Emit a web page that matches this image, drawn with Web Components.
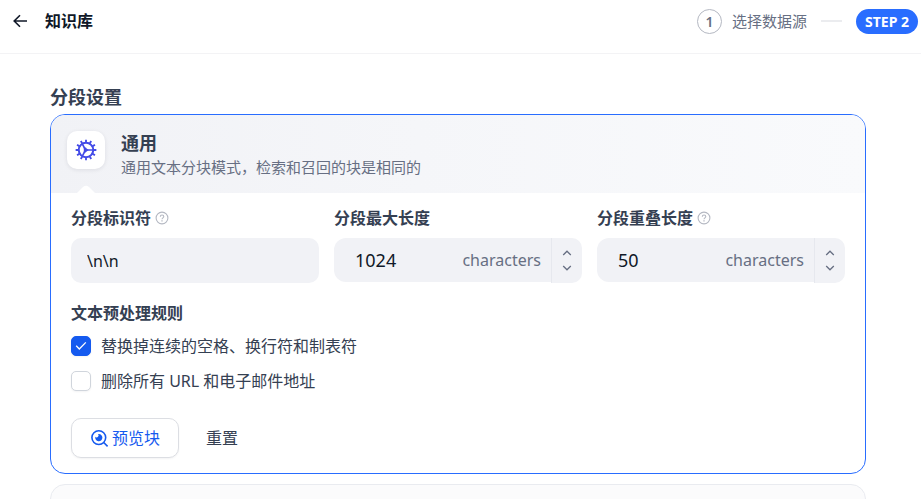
<!DOCTYPE html>
<html lang="zh-CN">
<head>
<meta charset="utf-8">
<meta name="viewport" content="width=device-width, initial-scale=1">
<title>知识库</title>
<style>
  body {
    margin: 0;
    background: #fff;
    color: #354052;
    font: 16px/24px "Noto Sans", "Noto Sans CJK SC", sans-serif;
  }
</style>
</head>
<body>
<kb-page>
  <kb-header slot="header">
    <span slot="title">知识库</span>
    <kb-step slot="steps" number="1">选择数据源</kb-step>
    <kb-step slot="steps" current>STEP 2</kb-step>
  </kb-header>
  <kb-section>
    <span slot="title">分段设置</span>
    <kb-mode-card active>
      <span slot="title">通用</span>
      <span slot="description">通用文本分块模式，检索和召回的块是相同的</span>
      <kb-field-row>
        <kb-text-field label="分段标识符" value="\n\n" help></kb-text-field>
        <kb-number-field label="分段最大长度" value="1024" unit="characters"></kb-number-field>
        <kb-number-field label="分段重叠长度" value="50" unit="characters" help></kb-number-field>
      </kb-field-row>
      <kb-rules>
        <span slot="title">文本预处理规则</span>
        <kb-check checked>替换掉连续的空格、换行符和制表符</kb-check>
        <kb-check>删除所有 URL 和电子邮件地址</kb-check>
      </kb-rules>
      <kb-actions>
        <kb-button kind="outline">预览块</kb-button>
        <kb-button kind="ghost">重置</kb-button>
      </kb-actions>
    </kb-mode-card>
    <kb-mode-card></kb-mode-card>
  </kb-section>
</kb-page>

<script>
const define = (name, render, setup) => customElements.define(name, class extends HTMLElement {
  constructor() {
    super();
    this.attachShadow({ mode: "open" });
  }
  connectedCallback() {
    if (this.shadowRoot.childNodes.length) return;
    const template = document.createElement("template");
    template.innerHTML = render(this);
    this.shadowRoot.append(template.content.cloneNode(true));
    if (setup) setup(this, this.shadowRoot);
  }
});

define("kb-page", () => `
  <style>
    :host { display: flex; flex-direction: column; height: 100vh; }
    main { flex: 1; min-height: 0; overflow-y: auto; scrollbar-width: none; }
  </style>
  <slot name="header"></slot>
  <main><slot></slot></main>`);

define("kb-header", () => `
  <style>
    :host { display: block; flex: none; }
    header { display: flex; align-items: center; justify-content: space-between; height: 53px; padding: 0 3px 11px 12px; box-sizing: border-box; }
    .bar { border-bottom: 1px solid #f3f3f5; }
    .left { display: flex; align-items: center; gap: 17px; }
    button { display: flex; padding: 0; border: 0; background: none; color: #101828; cursor: pointer; }
    h1 { margin: 0; font-size: 16px; line-height: 24px; font-weight: 600; color: #101828; }
    nav { display: flex; align-items: center; }
  </style>
  <div class="bar"><header>
    <div class="left">
      <button type="button" aria-label="返回"><svg width="16" height="16" viewBox="0 0 16 16" fill="none" stroke="currentColor" stroke-width="1.6"><path d="M8 2.2 2.2 8 8 13.8M2.4 8H15"/></svg></button>
      <h1><slot name="title"></slot></h1>
    </div>
    <nav aria-label="步骤"><slot name="steps"></slot></nav>
  </header></div>`);

define("kb-step", el => `
  <style>
    :host { display: flex; align-items: center; font-size: 15px; line-height: 25px; color: #676f83; }
    .num { width: 23px; height: 23px; line-height: 23px; border: 1px solid #b4b8c2; border-radius: 50%; text-align: center; font-size: 14px; font-weight: 600; margin-right: 10px; }
    .line { width: 21px; height: 2px; background: #ebecef; margin: 0 14px; }
    .pill { padding: 0 9px; border-radius: 13px; background: #296dff; color: #fff; font-size: 14px; font-weight: 700; }
  </style>
  ${el.hasAttribute("current")
    ? `<span class="pill" aria-current="step"><slot></slot></span>`
    : `<span class="num">${el.getAttribute("number")}</span><slot></slot><span class="line"></span>`}`);

define("kb-section", () => `
  <style>
    :host { display: block; padding: 31px 55px 24px 50px; }
    h2 { margin: 0 0 5px; font-size: 18px; line-height: 24px; font-weight: 600; }
    .list { display: grid; gap: 10px; }
  </style>
  <h2><slot name="title"></slot></h2>
  <div class="list"><slot></slot></div>`);

const teeth = Array.from({ length: 12 }, (_, i) => `<path d="M12 4V.7" transform="rotate(${i * 30} 12 12)"/>`).join("");

define("kb-mode-card", el => el.hasAttribute("active") ? `
  <style>
    :host { display: block; border: 1px solid #296dff; border-radius: 15px; overflow: hidden; background: #fff; }
    header { position: relative; display: flex; align-items: flex-start; gap: 16px; height: 78px; box-sizing: border-box; padding: 16px 16px 0; background: linear-gradient(90deg, #f1f2f6, #f5f6f9 45%, #f9fafc); }
    .tile { display: grid; place-items: center; width: 38px; height: 38px; border-radius: 10px; background: #fff; box-shadow: 0 1px 4px #10182818; }
    .notch { position: absolute; left: 26px; bottom: 0; }
    h3 { margin: 0; font-size: 18px; line-height: 24px; font-weight: 600; }
    p { margin: 0; font-size: 15px; line-height: 24px; color: #676f83; }
    .body { padding: 13px 20px 15px; }
  </style>
  <header>
    <div class="tile"><svg width="22" height="22" viewBox="0 0 24 24" fill="none" stroke="#444ce7" stroke-width="2"><circle cx="12" cy="12" r="7.9" stroke-width="2.2"/>${teeth}<path d="M12 12h8M11.5 12 8 5.4M11.5 12 8 18.6" stroke-width="1.8"/><path d="M9.6 8.4 11.4 9.2 14.8 12 11.4 14.8 9.6 15.6Z" fill="#444ce7" stroke="none"/></svg></div>
    <div><h3><slot name="title"></slot></h3><p><slot name="description"></slot></p></div>
    <svg class="notch" width="18" height="8" viewBox="0 0 18 8" fill="#fff"><path d="M0 8 6 2Q9-.6 12 2L18 8Z"/></svg>
  </header>
  <div class="body"><slot></slot></div>` : `
  <style>
    :host { display: block; min-height: 78px; border: 1px solid #e9ebf0; border-radius: 15px; background: #fbfbfc; }
  </style>
  <slot></slot>`);

define("kb-field-row", () => `
  <style>
    :host { display: grid; grid-template-columns: repeat(3, minmax(0, 1fr)); gap: 15px; }
  </style>
  <slot></slot>`);

define("kb-help", () => `
  <style>
    :host { display: flex; color: #b4b8c2; }
  </style>
  <svg width="14" height="14" viewBox="0 0 14 14" fill="none" stroke="currentColor" stroke-width="1.1"><circle cx="7" cy="7" r="5.9"/><path d="M5.3 5.8C5.3 3.4 8.8 3.6 8.8 5.6 8.8 6.8 7 6.9 7 8.3"/><path d="M7 9.3v1.2" stroke-width="1.3"/></svg>`);

const fieldStyle = `
    :host { display: block; }
    .label { display: flex; align-items: center; gap: 4px; height: 24px; margin-bottom: 8px; }
    label { font-weight: 600; }
    input { min-width: 0; box-sizing: border-box; border: 0; outline: 0; background: none; font: inherit; color: #101828; }`;
const fieldLabel = el => `
  <div class="label"><label for="input">${el.getAttribute("label")}</label>${el.hasAttribute("help") ? "<kb-help></kb-help>" : ""}</div>`;

define("kb-text-field", el => `
  <style>${fieldStyle}
    input { width: 100%; height: 45px; padding: 0 16px; border-radius: 10px; background: #f1f2f6; }
  </style>
  ${fieldLabel(el)}
  <input id="input" type="text" value="${el.getAttribute("value")}">`);

define("kb-number-field", el => `
  <style>${fieldStyle}
    .box { display: flex; align-items: flex-start; height: 45px; }
    .entry { flex: 1; min-width: 0; display: flex; align-items: center; height: 44px; box-sizing: border-box; padding: 0 10px 0 21px; border-radius: 12px 0 0 12px; background: #f1f2f6; }
    input { flex: 1; width: 0; padding: 0; font-size: 18px; }
    .unit { color: #676f83; }
    .steps { display: flex; flex-direction: column; align-items: center; justify-content: center; gap: 3px; width: 31px; height: 45px; box-sizing: border-box; border-left: 1px solid #e6e8ee; border-radius: 0 10px 10px 0; background: #f1f2f6; }
    button { display: grid; place-items: center; width: 20px; height: 12px; padding: 0; border: 0; background: none; color: #676f83; cursor: pointer; }
  </style>
  ${fieldLabel(el)}
  <div class="box">
    <div class="entry"><input id="input" type="text" inputmode="numeric" value="${el.getAttribute("value")}"><span class="unit">${el.getAttribute("unit")}</span></div>
    <div class="steps">
      <button type="button" data-step="1" aria-label="增加"><svg width="10" height="6" viewBox="0 0 10 6" fill="none" stroke="currentColor" stroke-width="1.3"><path d="M1.2 5 5 1.2 8.8 5"/></svg></button>
      <button type="button" data-step="-1" aria-label="减少"><svg width="10" height="6" viewBox="0 0 10 6" fill="none" stroke="currentColor" stroke-width="1.3"><path d="M1.2 1 5 4.8 8.8 1"/></svg></button>
    </div>
  </div>`, (el, root) => {
  const input = root.querySelector("input");
  root.querySelectorAll("button").forEach(button => button.addEventListener("click", () => {
    input.value = Math.max(0, (Number(input.value) || 0) + Number(button.dataset.step));
  }));
});

define("kb-rules", () => `
  <style>
    :host { display: block; margin-top: 18px; }
    h4 { margin: 0 0 9px; font-size: 16px; line-height: 24px; font-weight: 600; }
    .list { display: grid; gap: 11px; }
  </style>
  <h4><slot name="title"></slot></h4>
  <div class="list"><slot></slot></div>`);

define("kb-check", el => `
  <style>
    :host { display: block; }
    label { display: flex; align-items: center; gap: 10px; height: 24px; }
    .box { display: grid; width: 20px; height: 20px; }
    input, svg { grid-area: 1 / 1; }
    input { appearance: none; width: 20px; height: 20px; margin: 0; border: 1px solid #d0d5dc; border-radius: 5px; background: #fff; box-shadow: 0 1px 2px #1018280d; }
    input:checked { border-color: #155aef; background: #155aef; }
    svg { place-self: center; pointer-events: none; }
    input:not(:checked) + svg { visibility: hidden; }
  </style>
  <label><span class="box"><input type="checkbox"${el.hasAttribute("checked") ? " checked" : ""}><svg width="12" height="12" viewBox="0 0 12 12" fill="none" stroke="#fff" stroke-width="1.3"><path d="m1.2 5.8 3.1 3.2 6.5-6.6"/></svg></span><span><slot></slot></span></label>`);

define("kb-actions", () => `
  <style>
    :host { display: flex; gap: 8px; margin-top: 25px; }
  </style>
  <slot></slot>`);

define("kb-button", el => {
  const outline = el.getAttribute("kind") === "outline";
  return `
  <style>
    :host { display: block; }
    button { display: flex; align-items: center; gap: 3px; height: 40px; box-sizing: border-box; padding: 0 18px; border: 1px solid transparent; border-radius: 10px; background: none; font: inherit; color: #354052; cursor: pointer; }
    .outline { border-color: #dcdee3; background: #fff; color: #155aef; box-shadow: 0 1px 2px #1018280d; }
  </style>
  <button type="button" class="${outline ? "outline" : "ghost"}">${outline ? `<svg width="19" height="19" viewBox="0 0 19 19" fill="none" stroke="currentColor" stroke-width="1.6"><circle cx="8.8" cy="8.6" r="6.9"/><path d="m13.7 13.5 3.9 3.9"/><path d="M8.8 5a3.6 3.6 0 1 1-3.5 2.8A1.9 1.9 0 1 0 8 5.1Z" fill="currentColor" stroke="none"/></svg>` : ""}<slot></slot></button>`;
});
</script>
</body>
</html>
